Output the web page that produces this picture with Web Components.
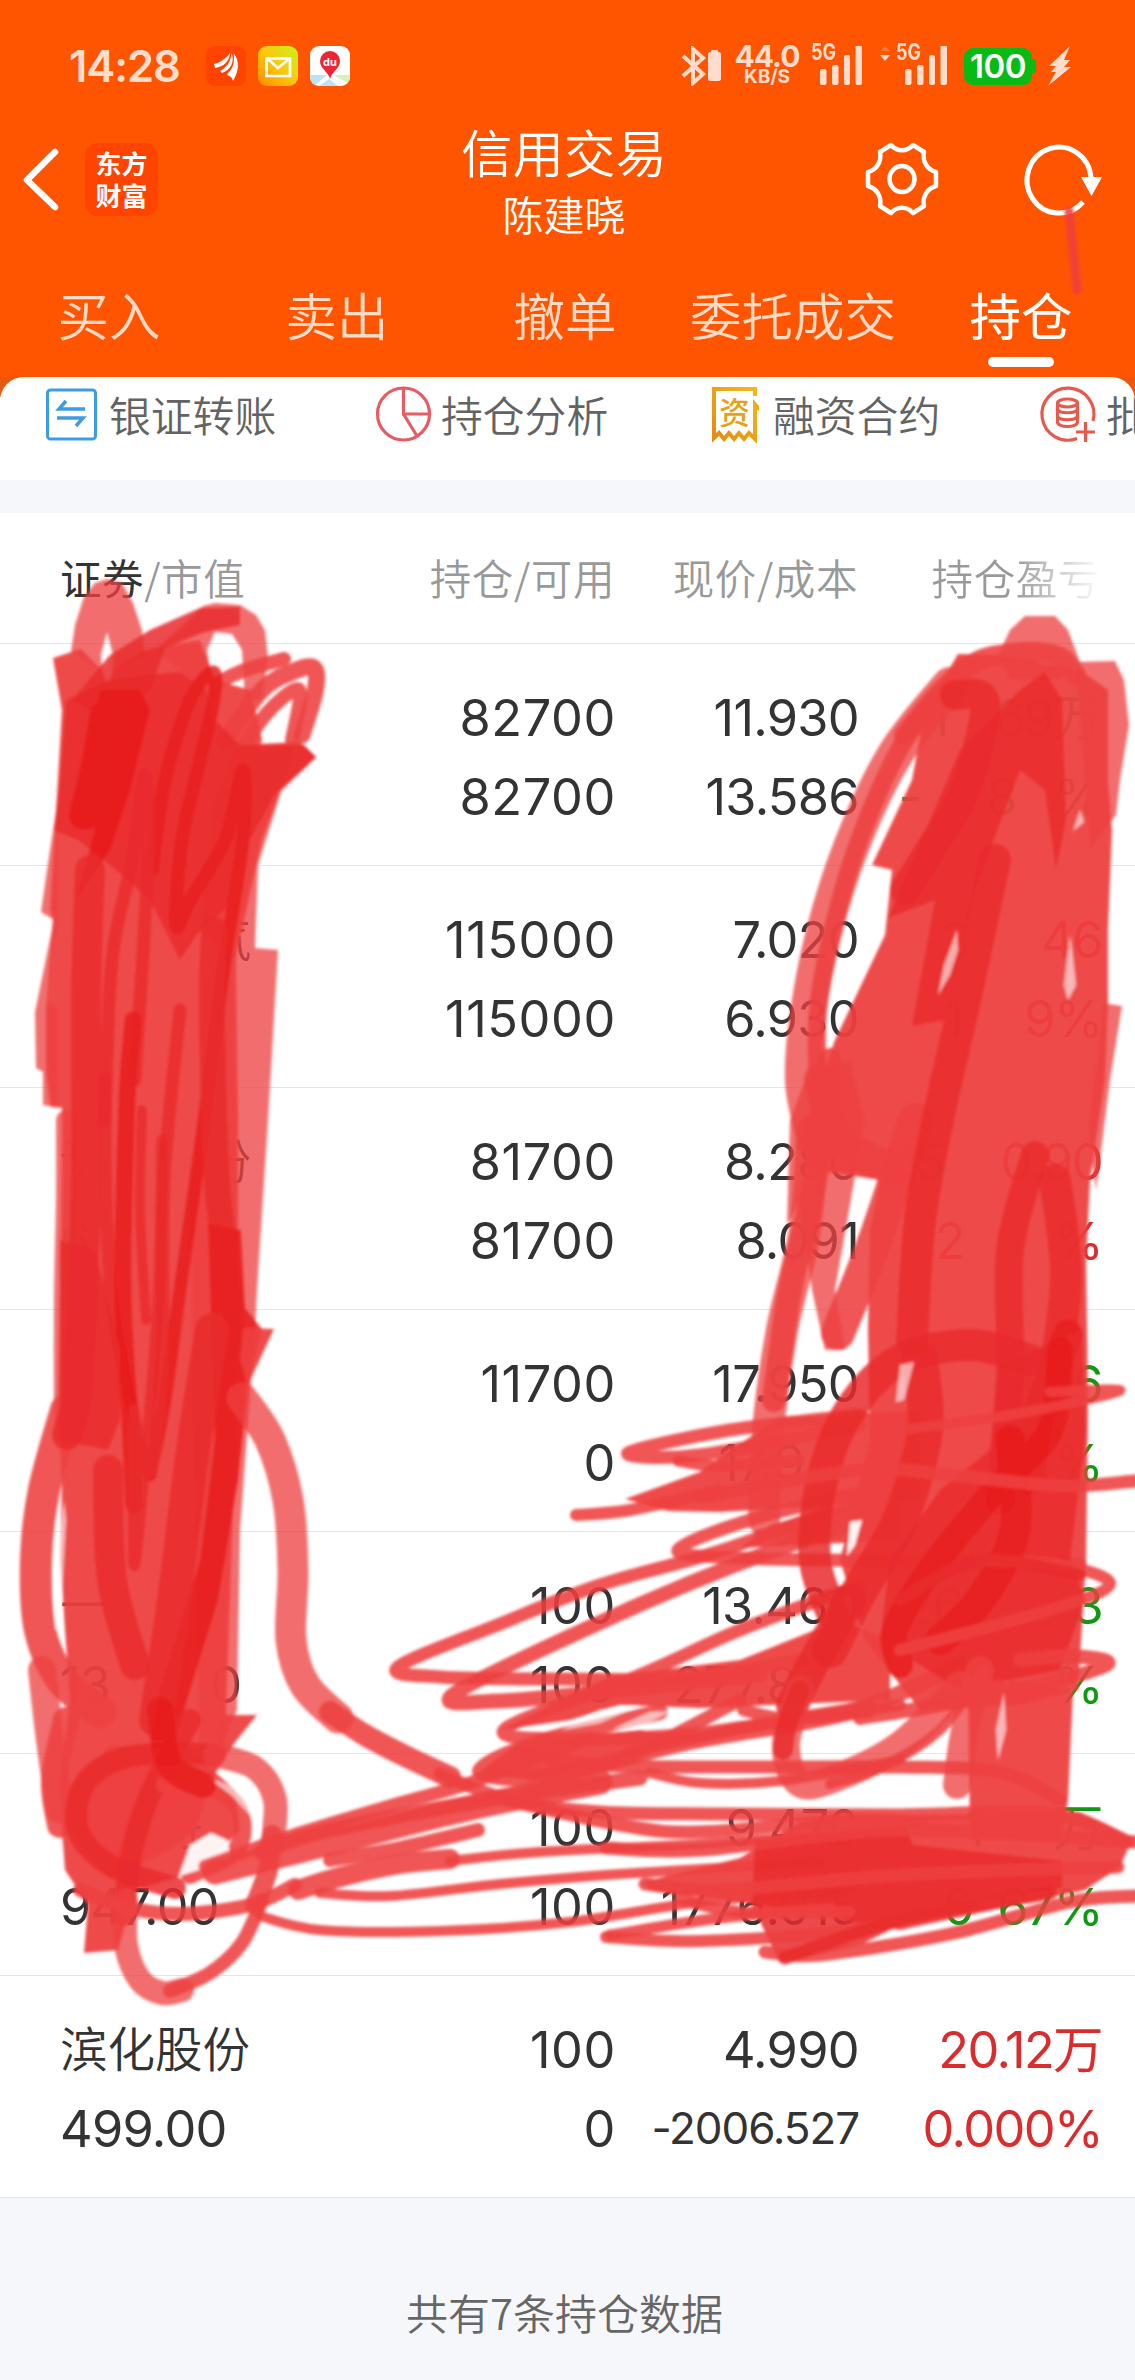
<!DOCTYPE html>
<html lang="zh-CN">
<head>
<meta charset="utf-8">
<title>信用交易</title>
<style>
  body {
    margin: 0;
    width: 1135px;
    height: 2380px;
    overflow: hidden;
    background: #f6f7fa;
    color: #333;
    font-family: Inter, "Noto Sans CJK SC", sans-serif;
  }
</style>
</head>
<body>
<trade-app></trade-app>

<script>
/* Small helper: attach an open root and fill it from a template */
function render(el, html) {
  const template = document.createElement("template");
  template.innerHTML = html;
  el.attachShadow({ mode: "open" }).appendChild(template.content.cloneNode(true));
}

/* Phone status bar: clock, notification icons, network, battery */
class StatusBar extends HTMLElement {
  constructor() {
    super();
    render(this, `
      <style>
        :host { display: flex; height: 40px; padding: 46px 64px 0 69px; color: #ffdccb; align-items: center; }
        svg { display: block; flex: none; }
        .time { width: 137px; font-size: 43.500px; font-weight: 600; line-height: 40px; letter-spacing: -1.100px; }
        .apps { display: flex; gap: 12px; flex: 1; }
        .speed { width: 66px; margin-left: 13px; text-align: center; }
        .speed b { display: block; font-size: 30px; line-height: 21px; letter-spacing: -1px; font-weight: 700; }
        .speed small { display: block; font-size: 19px; line-height: 19px; font-weight: 700; }
        .signal { display: flex; margin-left: 11px; position: relative; }
        .signal.two { margin-left: 17px; }
        .signal span { position: absolute; left: 0; top: -3px; font-size: 23px; line-height: 19px; font-weight: 700; transform: scaleX(.78); transform-origin: 0 0; }
        .signal.two span { left: 17px; }
        .battery { width: 68px; height: 37px; margin-left: 17px; border-radius: 9px; background: #08ba15; color: #fff; font-size: 33px; line-height: 37px; font-weight: 600; letter-spacing: -.5px; text-align: center; position: relative; }
        .battery::after { content: ""; position: absolute; right: -4px; top: 11px; width: 4px; height: 14px; border-radius: 0 3px 3px 0; background: #08ba15; }
        .bolt { margin-left: 16px; }
      </style>
      <div class="time">14:28</div>
      <div class="apps">
        <svg width="40" height="40" viewBox="0 0 40 40"><rect width="40" height="40" rx="9" fill="#ff4300"/>
          <path d="M8 18C13 17 20 13 24 7C24 14 18 21 9 22ZM14 25C20 22 25 16 25.500 7C29 15 25 24 16 27ZM22 27C27 23 29 16 27.500 7C34 15 33 25 27 35C26 31 24 30 21 29Z" fill="#fff"/></svg>
        <svg width="40" height="40" viewBox="0 0 40 40"><defs><linearGradient id="m" x1="0" y1="1" x2="1" y2="0"><stop stop-color="#ff8a00"/><stop offset=".5" stop-color="#fbc80c"/><stop offset="1" stop-color="#c8f31a"/></linearGradient></defs>
          <rect width="40" height="40" rx="9" fill="url(#m)"/><path d="M8.500 12.500H32V30H8.500ZM10 13L20 22L31 13" fill="none" stroke="#fff" stroke-width="2.700"/></svg>
        <svg width="40" height="40" viewBox="0 0 40 40"><defs><clipPath id="c"><rect width="40" height="40" rx="9"/></clipPath></defs>
          <g clip-path="url(#c)"><rect width="40" height="40" fill="#fff"/><path d="M0 29H17L4 40H0Z" fill="#b9e3f8"/><path d="M23 29H40V38Z" fill="#d6f0c2"/><path d="M19 33L28 40H9Z" fill="#b9e3f8"/></g>
          <path d="M20 33C18 25 10 23 10 15A10 10 0 0 1 30 15C30 23 22 25 20 33Z" fill="#ee2634"/>
          <text x="20" y="19.500" font-size="11" font-weight="700" font-family="Inter" fill="#fff" text-anchor="middle">du</text></svg>
      </div>
      <svg width="40" height="40" viewBox="0 0 40 40"><path d="M2 10L22 28L12 37V3L22 12L2 30" fill="none" stroke="currentColor" stroke-width="4"/><rect x="27" y="6" width="13" height="29" rx="2.500" fill="currentColor"/><rect x="30" y="4" width="7" height="4" rx="1" fill="currentColor"/></svg>
      <div class="speed"><b>44.0</b><small>KB/S</small></div>
      <div class="signal"><span>5G</span>
        <svg width="51" height="40" viewBox="0 0 51 40" fill="currentColor"><rect x="9" y="23" width="6.500" height="16" rx="2"/><rect x="21" y="19" width="6.500" height="20" rx="2"/><rect x="33" y="9" width="6" height="30" rx="2"/><rect x="44.500" y="-1" width="6.500" height="40" rx="2"/></svg></div>
      <div class="signal two"><span>5G</span>
        <svg width="68" height="40" viewBox="0 0 68 40" fill="currentColor"><path d="M1 5L6 0L11 5Z" opacity=".25"/><path d="M1 9H11L6 15Z"/><rect x="26" y="23" width="6.500" height="16" rx="2"/><rect x="38" y="19" width="6.500" height="20" rx="2"/><rect x="50" y="9" width="6" height="30" rx="2"/><rect x="61.500" y="-1" width="6.500" height="40" rx="2"/></svg></div>
      <div class="battery">100</div>
      <svg class="bolt" width="23" height="40" viewBox="0 0 23 40"><path d="M22 0L1 20H8L3 26H8L0 40L23 21H16L22 14H16Z" fill="currentColor"/></svg>
    `);
  }
}
customElements.define("status-bar", StatusBar);

/* Title row */
class NavBar extends HTMLElement {
  constructor() {
    super();
    render(this, `
      <style>
        :host { display: grid; grid-template-columns: 1fr 240px 1fr; height: 134px; margin-top: 36px; padding: 0 32px 0 24px; color: #fff; }
        .side { display: flex; align-items: center; height: 114px; }
        .right { justify-content: flex-end; gap: 88px; }
        .badge { width: 73px; height: 73px; box-sizing: border-box; margin-left: 27px; padding-top: 4px; border-radius: 13px; background: #ff4400; font: 700 26px/32px "Noto Sans CJK SC", sans-serif; text-align: center; }
        .title { text-align: center; font-family: "Noto Sans CJK SC", sans-serif; font-weight: 350; margin-top: -3px; padding-left: 1px; }
        .title div { font-size: 51.500px; line-height: 63px; }
        .title p { margin: 0; font-size: 41px; line-height: 63px; }
        svg { display: block; overflow: visible; fill: none; stroke: #fff; }
      </style>
      <div class="side">
        <svg width="34" height="60" viewBox="0 0 34 60"><path d="M31 3L3 31L31 58" stroke-width="6.500" stroke-linecap="round" stroke-linejoin="round"/></svg>
        <div class="badge">东方<br>财富</div>
      </div>
      <div class="title"><div><slot></slot></div><p><slot name="user"></slot></p></div>
      <div class="side right">
        <svg width="72" height="72" viewBox="-36 -36 72 72" stroke-width="4.500"><path d="M-11 -34C-5 -27 5 -27 11 -34L22 -27C20 -17 26 -9 34 -7V7C26 9 20 17 22 27L11 34C5 27 -5 27 -11 34L-22 27C-20 17 -26 9 -34 7V-7C-26 -9 -20 -17 -22 -27Z" stroke-linejoin="round"/><ellipse rx="12.500" ry="13"/></svg>
        <svg width="77" height="72" viewBox="0 0 77 72" stroke-width="5"><path d="M65 35A32 33 0 1 0 57 59"/><path d="M55 34H76L65.500 53Z" fill="#fff" stroke="none"/></svg>
      </div>
    `);
  }
}
customElements.define("nav-bar", NavBar);

class TabBar extends HTMLElement {
  connectedCallback() {
    const tabs = this.getAttribute("tabs").split(",");
    const active = this.getAttribute("active");
    render(this, `
      <style>
        :host { display: flex; height: 121px; margin-left: -5px; font: 350 51.500px/116px "Noto Sans CJK SC", sans-serif; color: #ffdac6; }
        div { width: 228px; flex: none; text-align: center; position: relative; }
        .on { color: #fff; font-weight: 400; }
        .on::after { content: ""; position: absolute; left: 81px; bottom: 10px; width: 66px; height: 10px; border-radius: 5px; background: #fff; }
      </style>
      ${tabs.map((t) => `<div class="${t === active ? "on" : ""}">${t}</div>`).join("")}
    `);
  }
}
customElements.define("tab-bar", TabBar);

/* Shortcut strip, scrolls off the right edge */
class QuickMenu extends HTMLElement {
  constructor() {
    super();
    render(this, `
      <style>
        :host { display: block; background: linear-gradient(#e55a10, #e55a10 20px, #fff 20px); }
        .strip { display: flex; height: 103px; padding-left: 46px; border-radius: 24px 24px 0 0; background: #fff; overflow: hidden; box-sizing: border-box; font: 350 41.800px/74px "Noto Sans CJK SC", sans-serif; color: #636363; white-space: nowrap; }
        .item { display: flex; flex: none; }
        svg { display: block; flex: none; fill: none; margin-top: 9px; overflow: visible; }
      </style>
      <div class="strip">
        <div class="item" style="width:330px"><svg width="63" height="56" viewBox="0 0 63 56" stroke="#3d9ce3" stroke-width="3"><rect x="1.500" y="4" width="48" height="49" rx="3"/><path d="M39 23H13L20 15M11 32H37L30 40" stroke-width="3.500"/></svg>银证转账</div>
        <div class="item" style="width:336px"><svg width="65" height="56" viewBox="0 0 65 56" stroke="#e55d62" stroke-width="3.200"><circle cx="27.500" cy="28" r="26"/><path d="M27.500 2V28H53M27.500 28L41 50"/></svg>持仓分析</div>
        <div class="item" style="width:330px"><svg width="61" height="56" viewBox="0 0 61 56"><defs><linearGradient id="g" x1="0" y1="1" x2="1" y2="0"><stop stop-color="#e58a12"/><stop offset="1" stop-color="#f3b91d"/></linearGradient></defs><path d="M43 10V3H2V52L7 47L12 53L17 47L22 53L27 47L32 53L37 47L43 53V18" stroke="url(#g)" stroke-width="4"/><path d="M41 13L47 20V25L41 21Z" fill="#eeaa18"/><text x="22.500" y="38" font-size="31" font-weight="500" font-family="Noto Sans CJK SC" fill="#e9a016" text-anchor="middle">资</text></svg>融资合约</div>
        <div class="item"><svg width="64" height="56" viewBox="0 0 64 56" stroke="#e65a4c" stroke-width="3.200"><path d="M51 35A26 26 0 1 0 35 52.500"/><ellipse cx="25.500" cy="17" rx="10" ry="4"/><path d="M15.500 17V36C15.500 42 35.500 42 35.500 36V17M15.500 23C17 28 34 28 35.500 23M15.500 30C17 35 34 35 35.500 30"/><path d="M34 46H53M43.500 36V56"/></svg>批量</div>
      </div>
    `);
  }
}
customElements.define("quick-menu", QuickMenu);

/*
 *  holding-row
 *   cells="a|b;c|d;..."  four columns, two lines each
 *   {n} inside a cell leaves a gap of n pixels
 */
class HoldingRow extends HTMLElement {
  connectedCallback() {
    const cell = (t) => t.replace(/\{(\d+)\}/g, '<i style="width:$1px"></i>');
    const cols = this.getAttribute("cells").split(";");
    render(this, `
      <style>
        :host { display: grid; grid-template-columns: 230px 326px 243px 243px; box-sizing: border-box; height: 222px; padding: 34px 0 0 60px; border-bottom: 1px solid #e6e6e6; background: #fff; font-size: 50.500px; line-height: 79px; text-align: right; letter-spacing: -.7px; white-space: nowrap; }
        div { min-width: 0; }
        p { margin: 0; height: 79px; display: flex; justify-content: flex-end; }
        .c0 p { justify-content: flex-start; }
        .c0 p:first-child { font: 350 47.500px/74px "Noto Sans CJK SC", sans-serif; letter-spacing: 0; }
        .c1 { letter-spacing: .6px; }
        .c3 { color: var(--tone, #d92d2d); letter-spacing: -1.600px; }
        .small { font-size: 44px; letter-spacing: -1.100px; }
        i { display: block; flex: none; }
      </style>
      ${cols.map((c, n) => `<div class="c${n}">${c.split("|").map((t) =>
        `<p class="${t.length > 8 && !t.includes("{") ? "small" : ""}">${cell(t)}</p>`).join("")}</div>`).join("")}
    `);
  }
}
customElements.define("holding-row", HoldingRow);

class HoldingsTable extends HTMLElement {
  constructor() {
    super();
    render(this, `
      <style>
        :host { display: block; margin-top: 33px; }
        header { display: grid; grid-template-columns: 230px 325px 243px 277px; box-sizing: border-box; height: 131px; padding: 0 0 0 60px; border-bottom: 1px solid #e6e6e6; background: #fff; font: 350 41.500px/128px "Noto Sans CJK SC", sans-serif; color: #999; text-align: right; white-space: nowrap; }
        header span { letter-spacing: .6px; }
        header span:first-child { text-align: left; }
        b { font-weight: 400; color: #333; }
        .fade { padding-right: 35px; background: linear-gradient(90deg, #999 155px, #fff 245px); background-clip: text; -webkit-background-clip: text; color: transparent; }
        footer { font: 350 42px/228px "Noto Sans CJK SC", sans-serif; color: #666; text-align: center; padding-right: 6px; height: 182px; }
      </style>
      <header><span><b>证券</b>/市值</span><span>持仓/可用</span><span>现价/成本</span><span class="fade">持仓盈亏</span></header>
      <slot></slot>
      <footer>共有7条持仓数据</footer>
    `);
  }
}
customElements.define("holdings-table", HoldingsTable);

/* Marker strokes drawn over the page. Each entry: tone, width (0 = filled shape), points */
const INK = [
  // pen mark in the header
  ["mid", 9, "1069,211 1073,250 1077,290"],

  // left column
  ["fill light", 0, "71,652 75,625 84,597 95,583 107,579 122,583 133,603 142,630 145,655 112,672 113,655 107,632 101,655 102,672"],
  ["fill light", 0, "155,650 180,628 203,606 215,603 240,605 256,615 265,630 268,658 262,700 245,700 242,650 232,634 215,632 207,650 215,700"],
  ["fill light", 0, "238,760 296,740 280,795 258,865 255,948 278,950 268,1120 257,1290 255,1330 240,1530 237,1710 200,1800 190,1200"],
  ["fill mid", 0, "53,658 81,649 103,672 107,686 114,670 142,651 155,648 200,640 215,680 250,690 258,720 262,740 252,770 246,840 236,960 238,1120 238,1330 236,1380 234,1480 225,1740 208,1790 196,1830 170,1850 110,1880 85,1850 62,1820 60,1780 70,1700 60,1560 62,1480 58,1400 60,1300 62,1160 62,1108 50,1106 46,1070 46,1010 53,918 50,910 55,830 62,710"],
  ["fill light", 0, "41,912 50,850 58,800 58,915 47,1000 58,1008 58,1108 43,1105 43,1072 36,1068 35,1012 54,920"],
  ["light", 20, "66,1120 66,1200 64,1300 64,1420"],
  ["mid", 32, "66,1410 44,1490 36,1560 40,1630 62,1680 100,1712"],
  ["light", 28, "42,1670 50,1740 60,1810"],
  ["mid", 26, "66,1720 54,1780 60,1825"],
  ["mid", 14, "205,690 240,672 284,659"],
  ["mid", 17, "225,740 262,690 292,672 314,668 315,692 302,735"],
  ["mid", 14, "240,750 268,712 294,690 300,698 292,740"],
  ["fill mid", 0, "238,745 300,742 316,757 280,792 262,840 235,960 200,930 215,800"],
  ["fill dark", 0, "72,700 110,655 150,630 200,608 240,607 240,625 205,632 165,648 150,690 110,720"],
  ["fill dark", 0, "66,700 110,680 145,675 180,672 205,690 215,720 240,745 304,745 316,757 305,768 276,792 250,840 225,910 200,930 180,960 150,900 110,865 78,840 54,830 60,780"],
  ["deep", 30, "105,715 95,770 84,815"],
  ["fill deep", 0, "100,690 140,690 150,710 130,790 110,850 76,900 95,830 84,780"],
  ["deep", 13, "152,870 165,780 190,700 213,672 214,700 200,760 182,840 176,925 190,900 225,840 243,770 243,840 225,960 200,1150 180,1290 165,1400 150,1475"],
  ["dark", 13, "105,1120 112,960 132,860 145,774 148,860 135,1080"],
  ["dark", 30, "90,870 86,1000 86,1180 78,1380 67,1435"],
  ["dark", 26, "214,930 212,1010 217,1180 232,1330 225,1480"],
  ["dark", 13, "105,1080 106,1200 112,1300 128,1390 150,1470 162,1350 164,1180 180,1010"],
  ["deep", 17, "133,1020 127,1100 123,1290 130,1420 134,1505"],
  ["dark", 11, "134,1410 134,1565 146,1450 158,1300 162,1140"],
  ["dark", 10, "142,1110 140,1210 146,1320"],
  ["fill dark", 0, "60,1240 95,1250 120,1350 120,1420 108,1450 60,1440"],
  ["fill deep", 0, "208,1224 241,1230 245,1308 262,1329 248,1385 238,1480 218,1600 187,1700 175,1740 150,1740 160,1690 200,1560 215,1440"],
  ["fill mid", 0, "243,1328 274,1329 248,1385 240,1360"],
  ["dark", 34, "212,1330 193,1450 174,1600 156,1720"],
  ["dark", 30, "108,1470 112,1580 135,1665"],
  ["fill mid", 0, "220,1715 257,1715 233,1745 205,1790"],
  ["fill paler", 0, "64,1500 66,1520 60,1625 55,1630 56,1570"],

  // circles round the bottom-left rows
  ["fill mid", 0, "66,1790 110,1745 190,1750 235,1790 240,1830 200,1870 135,1890 118,1950 84,1953 88,1905 65,1870 62,1830"],
  ["dark", 22, "175,1888 110,1865 78,1830 84,1785 120,1759 175,1753 215,1755"],
  ["light", 24, "215,1755 255,1768 275,1800 272,1845"],
  ["mid", 20, "272,1835 268,1870 255,1905"],
  ["dark", 22, "190,1720 152,1790 132,1850 124,1915"],
  ["light", 24, "126,1900 126,1945 140,1980 162,1993 182,1990"],
  ["mid", 14, "170,1991 210,1973 242,1943 262,1900"],
  ["mid", 18, "165,1785 212,1788 240,1812 236,1850 190,1875"],
  ["fill white", 0, "179,1876 190,1845 211,1833 227,1840 231,1858 205,1868"],
  ["fill paler", 0, "206,1776 236,1788 258,1812 262,1838 250,1815 232,1796"],
  ["mid", 14, "80,1890 125,1907 180,1914 250,1905 295,1885"],
  ["deep", 26, "160,1710 170,1765 203,1785"],

  // long tail that joins both sides
  ["light", 31, "242,1398 270,1440 288,1500 293,1570 291,1640 305,1685 338,1718"],
  ["mid", 22, "330,1712 365,1735 405,1756 450,1777"],
  ["mid", 13, "440,1774 510,1800 600,1812 720,1814 900,1815 1050,1813 1128,1842"],
  ["mid", 13, "505,1800 620,1825 700,1832 850,1820 920,1822"],
  ["mid", 13, "205,1866 300,1833 400,1803 470,1783 590,1738"],
  ["mid", 25, "215,1872 330,1843 470,1808 600,1782"],
  ["mid", 15, "260,1852 330,1830 500,1798 640,1778"],
  ["mid", 20, "298,1890 340,1877 400,1864 450,1859"],
  ["mid", 14, "330,1860 400,1848 478,1830"],
  ["mid", 10, "320,1893 390,1896 500,1884 620,1874 820,1862"],
  ["mid", 10, "260,1916 320,1930 440,1931 570,1922 700,1902 850,1890"],
  ["mid", 10, "450,1861 540,1852 700,1844 900,1830"],

  // middle zigzag
  ["mid", 13, "860,1415 730,1430 628,1453 700,1455 860,1425"],
  ["mid", 11, "678,1461 720,1466 800,1460"],
  ["fill mid", 0, "730,1450 780,1418 920,1410 920,1500 720,1512 668,1511 625,1499 700,1472"],
  ["mid", 12, "576,1515 630,1510 720,1490"],
  ["fill mid", 0, "860,1500 900,1500 900,1540 740,1548 770,1525"],
  ["mid", 13, "870,1490 750,1520 678,1550 740,1558 900,1561 1080,1564"],
  ["mid", 12, "760,1535 800,1528 850,1512"],
  ["mid", 13, "860,1500 720,1551 600,1585 500,1624 398,1667 440,1677 560,1679 690,1678 800,1660"],
  ["mid", 15, "860,1520 730,1567 610,1618 454,1694 500,1701 620,1690 760,1675"],
  ["mid", 13, "860,1585 740,1630 640,1675 506,1728 560,1739 700,1733 870,1706"],
  ["fill mid", 0, "610,1676 740,1660 840,1620 890,1640 890,1700 700,1708 620,1705 570,1720 500,1730"],
  ["mid", 16, "660,1712 540,1742 480,1771 550,1776 690,1742 850,1712 960,1665"],
  ["fill mid", 0, "515,1745 640,1730 700,1738 610,1762 540,1780 475,1775"],
  ["mid", 13, "520,1752 600,1765 740,1767 900,1767 1000,1772 1060,1800"],
  ["mid", 13, "740,1700 620,1760 530,1775"],
  ["mid", 10, "650,1773 700,1783 780,1781 900,1760"],
  ["mid", 12, "630,1752 760,1725 900,1705"],
  ["mid", 12, "743,1710 790,1719 870,1712"],
  ["fill paler", 0, "562,1730 600,1710 640,1705 600,1723"],
  ["fill paler", 0, "613,1729 650,1712 672,1711 640,1727"],

  // right column
  ["fill light", 0, "998,655 1010,630 1025,616 1055,616 1068,630 1080,662 1060,680 1010,680"],
  ["fill light", 0, "1075,662 1115,661 1124,680 1129,725 1120,780 1116,815 1090,850"],
  ["mid", 20, "1076,675 1060,657 1030,652 980,660 940,692 904,735"],
  ["light", 36, "950,685 898,750 860,825 830,910 810,1000 803,1080 815,1140"],
  ["mid", 18, "955,680 905,740 863,830 835,920 818,1010 818,1100"],
  ["fill mid", 0, "958,654 1000,655 1080,670 1108,690 1108,780 1112,830 1108,930 1108,1005 1105,1080 1090,1180 1086,1260 1088,1400 1086,1560 1078,1690 1020,1705 920,1710 865,1640 840,1560 870,1440 868,1330 870,1230 880,1180 815,1170 800,1140 835,1040 885,935 892,870 872,865 912,780 925,710"],
  ["fill light", 0, "1103,1003 1122,1006 1110,1080 1096,1190 1088,1130"],
  ["fill light", 0, "805,1080 850,1060 865,1120 835,1290 845,1350 825,1350 812,1290 800,1200 787,1225 790,1120"],
  ["light", 32, "812,1130 805,1230 782,1330 768,1430 764,1520"],
  ["mid", 24, "830,1060 815,1180 790,1290 774,1400"],
  ["mid", 34, "915,1120 875,1240 838,1333"],
  ["mid", 32, "820,1080 840,1140 895,1170"],
  ["dark", 30, "955,695 985,703 965,790 930,850 905,890"],
  ["fill dark", 0, "1020,690 1045,672 1062,700 1066,820 1056,870 1045,790 1020,770 975,890 945,1020 912,1026 935,900 888,918 930,820 960,750"],
  ["dark", 32, "995,860 965,1000 940,1110 920,1220 912,1340"],
  ["dark", 28, "1035,1155 1010,1250 1010,1370 1000,1500"],
  ["dark", 32, "1055,1180 1066,1280 1050,1400"],
  ["deep", 30, "1068,1335 1040,1410 1030,1480"],
  ["dark", 32, "1030,1360 970,1345 900,1360 850,1410 822,1480 815,1560 835,1620"],
  ["dark", 36, "920,1360 925,1430 900,1520 860,1590 830,1650"],
  ["fill dark", 0, "1000,1365 1082,1330 1086,1430 1070,1560 1085,1600 1060,1670 960,1690 880,1640 890,1560 940,1490 990,1450"],
  ["deep", 30, "1010,1440 1015,1530 980,1600 940,1640"],
  ["deep", 26, "1060,1350 1050,1430 995,1490 930,1570 895,1630 900,1665"],
  ["fill paler", 0, "1072,835 1080,810 1084,822 1074,830"],
  ["fill paler", 0, "1070,935 1072,950 1076,985 1068,1000 1064,985"],
  ["fill paler", 0, "957,930 958,950 950,975 938,995 944,965"],
  ["fill white", 0, "850,1522 862,1520 855,1545 847,1556"],
  ["fill paler", 0, "900,1365 914,1362 904,1400 896,1402"],
  ["mid", 13, "700,1497 860,1470 950,1475 1060,1486 1135,1481"],
  ["mid", 10, "900,1430 1010,1415 1120,1391 1050,1392"],
  ["mid", 12, "980,1560 1060,1565 1110,1584 1050,1610 900,1650"],
  ["dark", 12, "900,1600 980,1560 1080,1575"],
  ["mid", 14, "1020,1660 1070,1656 1108,1664 1040,1685 940,1705 860,1718"],
  ["dark", 32, "850,1600 815,1660 792,1705"],
  ["light", 28, "800,1690 786,1745 798,1782 830,1780 900,1745 960,1685"],
  ["dark", 20, "800,1690 787,1725 783,1750"],
  ["mid", 10, "830,1784 880,1768 940,1730 985,1670"],
  ["light", 28, "980,1670 964,1735 957,1785"],
  ["fill mid", 0, "968,1680 1005,1680 1000,1700 1010,1680 1073,1690 1068,1800 1060,1840 970,1840"],
  ["fill paler", 0, "1004,1692 1006,1730 998,1760 996,1730"],

  // bottom right
  ["fill mid", 0, "800,1822 920,1815 1080,1812 1133,1837 1120,1867 1085,1890 900,1930 760,1905 650,1890 643,1882 740,1858"],
  ["fill dark", 0, "755,1842 800,1836 905,1826 913,1845 1062,1861 1062,1888 940,1905 860,1945 780,1963 752,1905"],
  ["mid", 13, "606,1848 700,1850 900,1830 1135,1842"],
  ["mid", 13, "645,1884 720,1890 900,1875 1118,1867"],
  ["mid", 12, "680,1899 740,1912 850,1912"],
  ["mid", 12, "606,1937 700,1941 850,1930 970,1905"],
  ["mid", 13, "765,1952 820,1955 950,1934 1070,1902 1135,1896"],
  ["mid", 11, "610,1935 720,1918 830,1908"],
  ["dark", 13, "785,1958 900,1920 1050,1893"],
];

class InkMarks extends HTMLElement {
  constructor() {
    super();
    // Catmull-Rom through the points, as cubic segments
    function smooth(p) {
      let d = `M${p[0]}`;
      for (let i = 0; i < p.length - 1; i++) {
        const a = p[i - 1] || p[i], b = p[i], c = p[i + 1], e = p[i + 2] || c;
        d += `C${b[0] + (c[0] - a[0]) / 6} ${b[1] + (c[1] - a[1]) / 6} ${c[0] - (e[0] - b[0]) / 6} ${c[1] - (e[1] - b[1]) / 6} ${c[0]} ${c[1]}`;
      }
      return d;
    }
    const shapes = INK.map(([tone, width, list]) => {
      const p = list.split(" ").map((s) => s.split(",").map(Number));
      if (!width) return `<path class="${tone}" d="M${p.join("L")}Z"/>`;
      return `<path class="${tone}" stroke-width="${width}" d="${smooth(p)}"/>`;
    }).join("");
    render(this, `
      <style>
        :host { position: absolute; left: 0; top: 0; pointer-events: none; }
        svg { display: block; }
        path { fill: none; stroke: var(--c); stroke-linecap: round; stroke-linejoin: round; opacity: .88; }
        .fill { fill: var(--c); stroke: none; opacity: .94; }
        .light { --c: #ee4141; opacity: .76; }
        .mid { --c: #ee4040; }
        .dark { --c: #e92c2d; opacity: .85; }
        .deep { --c: #e71d1d; opacity: .85; }
        .white { --c: #fff; }
        .paler { --c: #fff; opacity: .6; }
      </style>
      <svg width="1135" height="2380" viewBox="0 0 1135 2380">
        <defs><filter id="soft" x="0" y="0" width="1135" height="2380" filterUnits="userSpaceOnUse"><feGaussianBlur stdDeviation="1.8"/></filter></defs>
        <g filter="url(#soft)">${shapes}</g>
      </svg>
    `);
  }
}
customElements.define("ink-marks", InkMarks);

class TradeApp extends HTMLElement {
  constructor() {
    super();
    render(this, `
      <style>
        :host { display: block; position: relative; width: 1135px; height: 2380px; overflow: hidden; }
        .top { background: #ff5500; overflow: hidden; height: 377px; }
        .down { --tone: #0d9a12; }
      </style>
      <div class="top">
        <status-bar></status-bar>
        <nav-bar>信用交易<span slot="user">陈建晓</span></nav-bar>
        <tab-bar tabs="买入,卖出,撤单,委托成交,持仓" active="持仓"></tab-bar>
      </div>
      <quick-menu></quick-menu>
      <holdings-table>
        <holding-row class="down" cells="|;82700|82700;11.930|13.586;-1{46}69万|-{66}8{38}%"></holding-row>
        <holding-row cells="{144}气|;115000|115000;7.020|6.930;3{72}46|1{62}9%"></holding-row>
        <holding-row cells="讠{96}份|6;81700|81700;8.280|8.091;15{56}0.90|2{90}%"></holding-row>
        <holding-row class="down" cells="|;11700|0;17.950|17.9{55};6|%"></holding-row>
        <holding-row class="down" cells="一|13{100}0;100|100;13.460|277.8{62};26{110}3|%"></holding-row>
        <holding-row class="down" cells="{96}丹|947.00;100|100;9.470|1776.015;-1{70}万|0{24}67%"></holding-row>
        <holding-row cells="滨化股份|499.00;100|0;4.990|-2006.527;20.12万|0.000%"></holding-row>
      </holdings-table>
      <ink-marks></ink-marks>
    `);
  }
}
customElements.define("trade-app", TradeApp);
</script>
</body>
</html>
